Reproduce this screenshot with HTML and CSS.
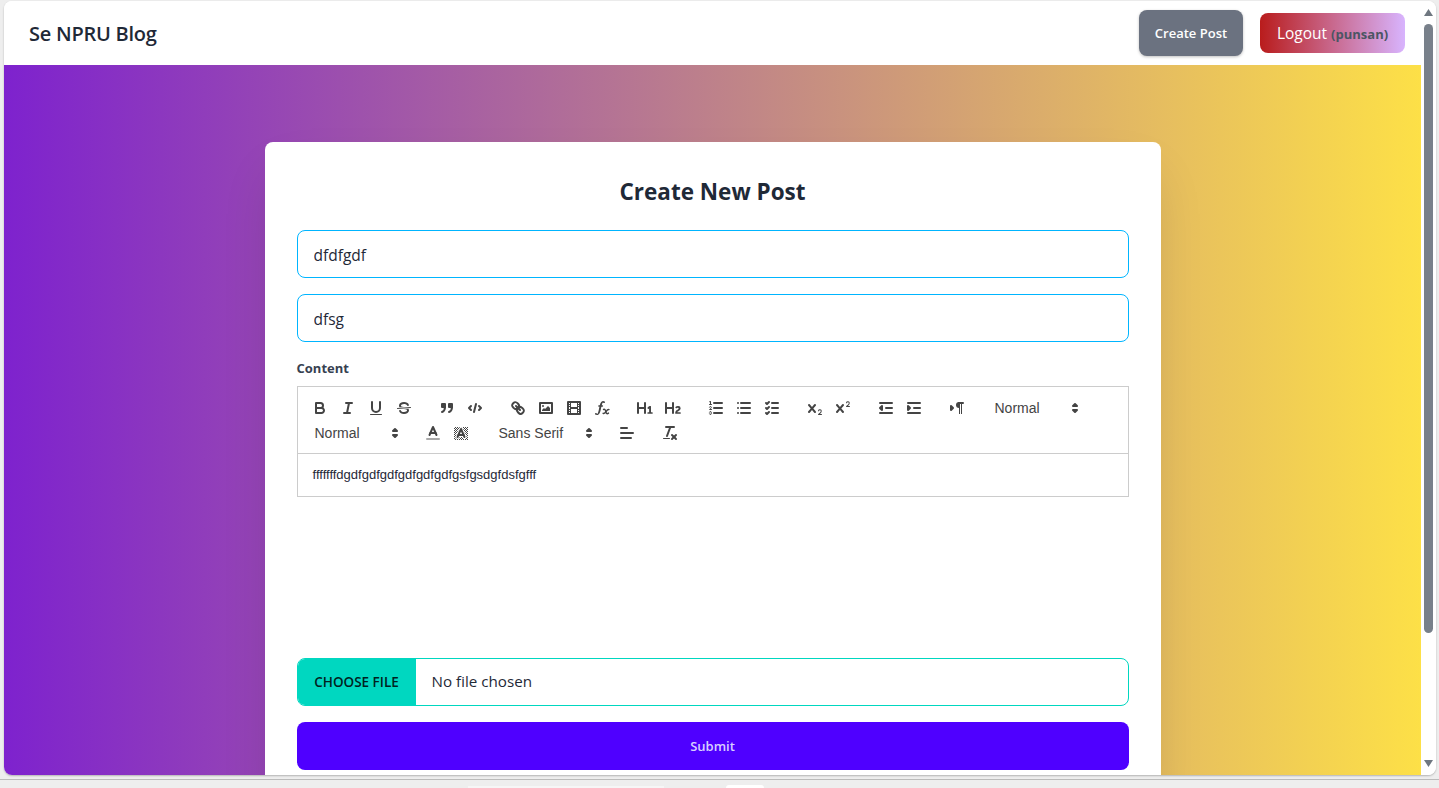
FILE: index.html
```html
<!DOCTYPE html>
<html lang="en">
<head>
    <meta charset="UTF-8">
    <meta name="viewport" content="width=device-width, initial-scale=1.0">
    <title>Create New Post</title>
    <link rel="stylesheet" href="styles.css">
</head>
<body>
    <div class="window">
        <div class="page">
            <nav class="navbar">
                <a class="brand">Se NPRU Blog</a>
                <div class="nav-actions">
                    <button class="btn-create" type="button">Create Post</button>
                    <button class="btn-logout" type="button">Logout <span class="username">(punsan)</span></button>
                </div>
            </nav>
            <main class="hero">
                <form class="card">
                    <h2 class="card-title">Create New Post</h2>
                    <input class="text-input" type="text" value="dfdfgdf">
                    <input class="text-input" type="text" value="dfsg">
                    <label class="field-label">Content</label>
                    <div class="toolbar">
                        <span class="tool-group">
                            <button class="tool" type="button"><svg viewBox="0 0 18 18"><path class="st" d="M5,4H9.5A2.5,2.5,0,0,1,12,6.5v0A2.5,2.5,0,0,1,9.5,9H5A0,0,0,0,1,5,9V4A0,0,0,0,1,5,4Z"/><path class="st" d="M5,9h5.5A2.5,2.5,0,0,1,13,11.5v0A2.5,2.5,0,0,1,10.5,14H5a0,0,0,0,1,0,0V9A0,0,0,0,1,5,9Z"/></svg></button>
                            <button class="tool" type="button"><svg viewBox="0 0 18 18"><line class="st" x1="7" x2="13" y1="4" y2="4"/><line class="st" x1="5" x2="11" y1="14" y2="14"/><line class="st" x1="8" x2="10" y1="14" y2="4"/></svg></button>
                            <button class="tool" type="button"><svg viewBox="0 0 18 18"><path class="st" d="M5,3V9a4.012,4.012,0,0,0,4,4H9a4.012,4.012,0,0,0,4-4V3"/><rect class="fl" height="1" rx="0.5" ry="0.5" width="12" x="3" y="15"/></svg></button>
                            <button class="tool" type="button"><svg viewBox="0 0 18 18"><line class="st thin" x1="15.5" x2="2.5" y1="8.5" y2="9.5"/><path class="fl" d="M9.007,8C6.542,7.791,6,7.519,6,6.5,6,5.792,7.283,5,9,5c1.571,0,2.765.679,2.969,1.309a1,1,0,0,0,1.9-.617C13.356,4.106,11.354,3,9,3,6.2,3,4,4.538,4,6.5a3.2,3.2,0,0,0,.5,1.843Z"/><path class="fl" d="M8.984,10C11.457,10.208,12,10.479,12,11.5c0,.708-1.283,1.5-3,1.5-1.571,0-2.765-.679-2.969-1.309a1,1,0,1,0-1.9.617C4.644,13.894,6.646,15,9,15c2.8,0,5-1.538,5-3.5a3.2,3.2,0,0,0-.5-1.843Z"/></svg></button>
                        </span>
                        <span class="tool-group">
                            <button class="tool" type="button"><svg viewBox="0 0 18 18"><rect class="fl st" height="3" width="3" x="4" y="5"/><rect class="fl st" height="3" width="3" x="11" y="5"/><path class="st" d="M7,8c0,4.031-3,5-3,5"/><path class="st" d="M14,8c0,4.031-3,5-3,5"/></svg></button>
                            <button class="tool" type="button"><svg viewBox="0 0 18 18"><polyline class="st" points="5 7 3 9 5 11"/><polyline class="st" points="13 7 15 9 13 11"/><line class="st" x1="10" x2="8" y1="5" y2="13"/></svg></button>
                        </span>
                        <span class="tool-group">
                            <button class="tool" type="button"><svg viewBox="0 0 18 18"><line class="st" x1="7" x2="11" y1="7" y2="11"/><path class="st" d="M8.9,4.577a3.476,3.476,0,0,1,.36,4.679A3.476,3.476,0,0,1,4.577,8.9C3.185,7.5,2.035,6.4,4.217,4.217S7.5,3.185,8.9,4.577Z"/><path class="st" d="M13.423,9.1a3.476,3.476,0,0,0-4.679-.36,3.476,3.476,0,0,0,.36,4.679c1.392,1.392,2.5,2.542,4.679.36S14.815,10.5,13.423,9.1Z"/></svg></button>
                            <button class="tool" type="button"><svg viewBox="0 0 18 18"><rect class="st" height="10" width="12" x="3" y="4"/><circle class="fl" cx="6" cy="7" r="1"/><polyline class="fl" points="5 12 5 11 7 9 8 10 11 7 13 9 13 12 5 12"/></svg></button>
                            <button class="tool" type="button"><svg viewBox="0 0 18 18"><rect class="st" height="12" width="12" x="3" y="3"/><rect class="fl" height="12" width="1" x="5" y="3"/><rect class="fl" height="12" width="1" x="12" y="3"/><rect class="fl" height="2" width="8" x="5" y="8"/><rect class="fl" height="1" width="3" x="3" y="5"/><rect class="fl" height="1" width="3" x="3" y="7"/><rect class="fl" height="1" width="3" x="3" y="10"/><rect class="fl" height="1" width="3" x="3" y="12"/><rect class="fl" height="1" width="3" x="12" y="5"/><rect class="fl" height="1" width="3" x="12" y="7"/><rect class="fl" height="1" width="3" x="12" y="10"/><rect class="fl" height="1" width="3" x="12" y="12"/></svg></button>
                            <button class="tool" type="button"><svg viewBox="0 0 18 18"><path class="fl" d="M11.759,2.482a2.561,2.561,0,0,0-3.53.607A7.656,7.656,0,0,0,6.8,6.2C6.109,9.188,5.275,14.677,4.15,14.927a1.545,1.545,0,0,0-1.3-.933A0.922,0.922,0,0,0,2,15.036S1.954,16,4.119,16s3.091-2.691,3.7-5.553c0.177-.826.36-1.726,0.554-2.6L8.775,6.2c0.381-1.421.807-2.521,1.306-2.676a1.014,1.014,0,0,0,1.02.56A0.966,0.966,0,0,0,11.759,2.482Z"/><rect class="fl" height="1.6" rx="0.8" ry="0.8" width="5" x="5.15" y="6.2"/><path class="st x-stroke" d="M10.5,10.5c1.4-.7,1.8.4,2.2,2s1.1,3,2.8,1.6"/><path class="st x-stroke" d="M16,10.6c-1.4-.5-2.3,1-3,2.1s-1.5,2.2-2.9,1.6"/></svg></button>
                        </span>
                        <span class="tool-group">
                            <button class="tool" type="button"><svg viewBox="0 0 18 18"><path class="fl" d="M10,4V14a1,1,0,0,1-2,0V10H3v4a1,1,0,0,1-2,0V4A1,1,0,0,1,3,4V8H8V4a1,1,0,0,1,2,0Zm6.06787,9.209H14.98975V7.59863a.54085.54085,0,0,0-.605-.60547h-.62744a1.01119,1.01119,0,0,0-.748.29688L11.645,8.56641a.5435.5435,0,0,0-.022.8584l.28613.30762a.53861.53861,0,0,0,.84717.0332l.09912-.08789a1.2137,1.2137,0,0,0,.2417-.35254h.02246s-.01123.30859-.01123.60547V13.209H12.041a.54085.54085,0,0,0-.605.60547v.43945a.54085.54085,0,0,0,.605.60547h4.02686a.54085.54085,0,0,0,.605-.60547v-.43945A.54085.54085,0,0,0,16.06787,13.209Z"/></svg></button>
                            <button class="tool" type="button"><svg viewBox="0 0 18 18"><path class="fl" d="M16.73975,13.81445v.43945a.54085.54085,0,0,1-.605.60547H11.855a.58392.58392,0,0,1-.64893-.60547V14.0127c0-2.90527,3.39941-3.42187,3.39941-4.51855a.77675.77675,0,0,0-.84717-.78125,1.17684,1.17684,0,0,0-.83594.38477c-.2749.26367-.561.374-.85791.13184l-.4292-.34082c-.30811-.24219-.38525-.51758-.1543-.81445a2.97155,2.97155,0,0,1,2.45361-1.17676,2.45393,2.45393,0,0,1,2.68408,2.40918c0,2.45312-3.1792,2.92676-3.27832,3.93848h2.79443A.54085.54085,0,0,1,16.73975,13.81445ZM9,3A.99974.99974,0,0,0,8,4V8H3V4A1,1,0,0,0,1,4V14a1,1,0,0,0,2,0V10H8v4a1,1,0,0,0,2,0V4A.99974.99974,0,0,0,9,3Z"/></svg></button>
                        </span>
                        <span class="tool-group">
                            <button class="tool" type="button"><svg viewBox="0 0 18 18"><line class="st" x1="7" x2="15" y1="4" y2="4"/><line class="st" x1="7" x2="15" y1="9" y2="9"/><line class="st" x1="7" x2="15" y1="14" y2="14"/><line class="st thin" x1="2.5" x2="4.5" y1="5.5" y2="5.5"/><path class="fl" d="M3.5,6A0.5,0.5,0,0,1,3,5.5V3.085l-0.276.138A0.5,0.5,0,0,1,2.053,3c-0.124-.247-0.023-0.324.224-0.447l1-.5A0.5,0.5,0,0,1,4,2.5v3A0.5,0.5,0,0,1,3.5,6Z"/><path class="st thin" d="M4.5,10.5h-2c0-.234,1.85-1.076,1.85-2.234A0.959,0.959,0,0,0,2.5,8.156"/><path class="st thin" d="M2.5,14.846a0.959,0.959,0,0,0,1.85-.109A0.7,0.7,0,0,0,3.75,14a0.688,0.688,0,0,0,.6-0.736,0.959,0.959,0,0,0-1.85-.109"/></svg></button>
                            <button class="tool" type="button"><svg viewBox="0 0 18 18"><line class="st" x1="6" x2="15" y1="4" y2="4"/><line class="st" x1="6" x2="15" y1="9" y2="9"/><line class="st" x1="6" x2="15" y1="14" y2="14"/><line class="st" x1="3" x2="3" y1="4" y2="4"/><line class="st" x1="3" x2="3" y1="9" y2="9"/><line class="st" x1="3" x2="3" y1="14" y2="14"/></svg></button>
                            <button class="tool" type="button"><svg viewBox="0 0 18 18"><line class="st" x1="9" x2="15" y1="4" y2="4"/><polyline class="st" points="3 4 4 5 6 3"/><line class="st" x1="9" x2="15" y1="14" y2="14"/><polyline class="st" points="3 14 4 15 6 13"/><line class="st" x1="9" x2="15" y1="9" y2="9"/><polyline class="st" points="3 9 4 10 6 8"/></svg></button>
                        </span>
                        <span class="tool-group">
                            <button class="tool" type="button"><svg viewBox="0 0 18 18"><path class="fl" d="M15.5,15H13.861a3.858,3.858,0,0,0,1.914-2.975,1.8,1.8,0,0,0-1.6-1.751A1.921,1.921,0,0,0,12.021,11.7a0.50013,0.50013,0,1,0,.957.291h0a0.914,0.914,0,0,1,1.053-.725,0.81,0.81,0,0,1,.744.762c0,1.076-1.16971,1.86982-1.93971,2.43082A1.45639,1.45639,0,0,0,12,15.5a0.5,0.5,0,0,0,.5.5h3A0.5,0.5,0,0,0,15.5,15Z"/><path class="fl" d="M9.65,5.241a1,1,0,0,0-1.409.108L6,7.964,3.759,5.349A1,1,0,0,0,2.192,6.59178Q2.21,6.6,2.241,6.651L4.684,9.5,2.241,12.35A1,1,0,0,0,3.71,13.70722q0.04-.05.049-0.05L6,11.036,8.241,13.65a1,1,0,1,0,1.567-1.24277Q9.8,12.4,9.759,12.35L7.316,9.5,9.759,6.651A1,1,0,0,0,9.65,5.241Z"/></svg></button>
                            <button class="tool" type="button"><svg viewBox="0 0 18 18"><path class="fl" d="M15.5,7H13.861a4.015,4.015,0,0,0,1.914-2.975,1.8,1.8,0,0,0-1.6-1.751A1.922,1.922,0,0,0,12.021,3.7a0.5,0.5,0,1,0,.957.291,0.917,0.917,0,0,1,1.053-.725,0.81,0.81,0,0,1,.744.762c0,1.077-1.164,1.925-1.934,2.486A1.423,1.423,0,0,0,12,7.5a0.5,0.5,0,0,0,.5.5h3A0.5,0.5,0,0,0,15.5,7Z"/><path class="fl" d="M9.651,5.241a1,1,0,0,0-1.41.108L6,7.964,3.759,5.349a1,1,0,1,0-1.519,1.3L4.683,9.5,2.241,12.35a1,1,0,1,0,1.519,1.3L6,11.036,8.241,13.65a1,1,0,0,0,1.519-1.3L7.317,9.5,9.759,6.651A1,1,0,0,0,9.651,5.241Z"/></svg></button>
                        </span>
                        <span class="tool-group">
                            <button class="tool" type="button"><svg viewBox="0 0 18 18"><line class="st" x1="3" x2="15" y1="14" y2="14"/><line class="st" x1="3" x2="15" y1="4" y2="4"/><line class="st" x1="9" x2="15" y1="9" y2="9"/><polyline class="fl st" points="5 7 5 11 3 9 5 7"/></svg></button>
                            <button class="tool" type="button"><svg viewBox="0 0 18 18"><line class="st" x1="3" x2="15" y1="14" y2="14"/><line class="st" x1="3" x2="15" y1="4" y2="4"/><line class="st" x1="9" x2="15" y1="9" y2="9"/><polyline class="fl st" points="3 7 3 11 5 9 3 7"/></svg></button>
                        </span>
                        <span class="tool-group">
                            <button class="tool" type="button"><svg viewBox="0 0 18 18"><polygon class="fl st" points="3 11 5 9 3 7 3 11"/><line class="st" x1="15" x2="11" y1="4" y2="4"/><path class="fl" d="M11,3a3,3,0,0,0,0,6h1V3H11Z"/><rect class="fl" height="11" width="1" x="11" y="4"/><rect class="fl" height="11" width="1" x="13" y="4"/></svg></button>
                        </span>
                        <span class="tool-group">
                            <span class="picker">Normal<svg viewBox="0 0 18 18"><polygon class="fl arrow" points="7 11 9 13 11 11 7 11"/><polygon class="fl arrow" points="7 7 9 5 11 7 7 7"/></svg></span>
                        </span>
                        <span class="tool-group">
                            <span class="picker">Normal<svg viewBox="0 0 18 18"><polygon class="fl arrow" points="7 11 9 13 11 11 7 11"/><polygon class="fl arrow" points="7 7 9 5 11 7 7 7"/></svg></span>
                        </span>
                        <span class="tool-group">
                            <button class="tool" type="button"><svg viewBox="0 0 18 18"><line class="label-line" x1="3" x2="15" y1="15" y2="15"/><polyline class="st" points="5.5 11 9 3 12.5 11"/><line class="st" x1="11.63" x2="6.38" y1="9" y2="9"/></svg></button>
                            <button class="tool" type="button"><svg viewBox="0 0 18 18"><defs><pattern id="dither" width="2" height="2" patternUnits="userSpaceOnUse"><rect class="fl" width="1" height="1"/><rect class="fl" x="1" y="1" width="1" height="1"/></pattern></defs><rect fill="url(#dither)" x="2" y="3" width="14" height="13"/><polyline class="halo" points="5.5 13 9 5 12.5 13"/><line class="halo" x1="11.63" x2="6.38" y1="11" y2="11"/><polyline class="st" points="5.5 13 9 5 12.5 13"/><line class="st" x1="11.63" x2="6.38" y1="11" y2="11"/></svg></button>
                        </span>
                        <span class="tool-group">
                            <span class="picker picker-font">Sans Serif<svg viewBox="0 0 18 18"><polygon class="fl arrow" points="7 11 9 13 11 11 7 11"/><polygon class="fl arrow" points="7 7 9 5 11 7 7 7"/></svg></span>
                        </span>
                        <span class="tool-group">
                            <button class="tool" type="button"><svg viewBox="0 0 18 18"><line class="st" x1="3" x2="15" y1="9" y2="9"/><line class="st" x1="3" x2="13" y1="14" y2="14"/><line class="st" x1="3" x2="9" y1="4" y2="4"/></svg></button>
                        </span>
                        <span class="tool-group">
                            <button class="tool" type="button"><svg viewBox="0 0 18 18"><line class="st" x1="5" x2="13" y1="3" y2="3"/><line class="st" x1="6" x2="9.35" y1="12" y2="3"/><line class="st" x1="11" x2="15" y1="11" y2="15"/><line class="st" x1="15" x2="11" y1="11" y2="15"/><rect class="fl" height="1" rx="0.5" ry="0.5" width="7" x="2" y="14"/></svg></button>
                        </span>
                    </div>
                    <div class="editor">fffffffdgdfgdfgdfgdfgdfgdfgsfgsdgfdsfgfff</div>
                    <input class="file-input" type="file">
                    <button class="btn-submit" type="submit">Submit</button>
                </form>
            </main>
        </div>
        <div class="scrollbar">
            <svg class="scroll-arrow" viewBox="0 0 9 7"><polygon points="4.5 0 9 7 0 7"/></svg>
            <div class="scroll-track"><div class="scroll-thumb"></div></div>
            <svg class="scroll-arrow" viewBox="0 0 9 7"><polygon points="0 0 9 0 4.5 7"/></svg>
        </div>
    </div>
    <div class="taskstrip">
        <span class="strip-tab strip-wide"></span>
        <span class="strip-tab strip-small"></span>
    </div>
</body>
</html>
```

FILE: styles.css
```css
* { box-sizing: border-box; }
html, body { height: 788px; overflow: hidden; }
body { margin: 0; background: #eeeeee; font-family: "Open Sans", "Noto Sans", sans-serif; color: #1f2937; display: flex; flex-direction: column; }

.window { margin: 1px 3px 0 4px; height: 774px; background: #fff; border-radius: 8px; overflow: hidden; display: flex; box-shadow: 0 1px 2px rgba(0,0,0,.25); }
.page { flex: 1; min-width: 0; display: flex; flex-direction: column; }

.navbar { height: 64px; flex: none; display: flex; align-items: center; justify-content: space-between; padding: 0 16px 0 25px; background: #fff; }
.brand { font-size: 20px; font-weight: 600; letter-spacing: -.25px; color: #1f2937; }
.nav-actions { display: flex; align-items: center; gap: 17px; }
.btn-create { width: 104px; height: 46px; border: none; border-radius: 8px; background: #6b7280; color: #fff; font: 600 13px "Open Sans", sans-serif; box-shadow: 0 1px 3px rgba(0,0,0,.25); padding: 0; }
.btn-logout { width: 145px; height: 40px; border: none; border-radius: 8px; background: linear-gradient(to right, #b91c1c, #d8b4fe); color: #fff; font: 400 15.5px "Open Sans", sans-serif; padding: 0; }
.username { font-size: 13px; font-weight: 700; color: #4b5563; }

.hero { flex: 1; min-height: 0; overflow: hidden; background: linear-gradient(to right, #7e22ce, #fde047); padding-top: 77px; }
.card { width: 896px; margin: 0 auto; padding: 32px; background: #fff; border-radius: 8px; box-shadow: 0 25px 50px -12px rgba(0,0,0,.15); display: flex; flex-direction: column; }
.card-title { margin: 0 0 24px; height: 32px; line-height: 36px; font-size: 22.5px; font-weight: 700; text-align: center; color: #1f2937; }

.text-input { width: 100%; height: 48px; margin-bottom: 16px; padding: 2px 16px 0; border: 1px solid #00b5ff; border-radius: 8px; background: #fff; color: #1f2937; font: 400 15.5px "Open Sans", sans-serif; outline: none; }
.field-label { height: 20px; margin: 0 0 8px; line-height: 20px; font-size: 13px; font-weight: 700; color: #374151; }

.toolbar { height: 68px; border: 1px solid #ccc; padding: 9px 8px 8px; display: flex; flex-wrap: wrap; align-content: flex-start; row-gap: 1px; font-family: "Liberation Sans", Arial, sans-serif; }
.tool-group { display: flex; height: 24px; margin-right: 15px; }
.tool { width: 28px; height: 24px; padding: 3px 5px; border: none; background: none; }
.tool svg { display: block; width: 18px; height: 18px; }
.st { fill: none; stroke: #444; stroke-width: 2; stroke-linecap: round; stroke-linejoin: round; }
.thin { stroke-width: 1; }
.x-stroke { stroke-width: 1.4; }
.halo { fill: none; stroke: #fff; stroke-width: 4; stroke-linecap: round; stroke-linejoin: round; }
.fl { fill: #444; }
.arrow { stroke: #444; stroke-width: 2; stroke-linejoin: round; }
.fl.st { fill: #444; }
.label-line { stroke: #aaa; stroke-width: 2; stroke-linecap: round; }
.picker { width: 98px; height: 24px; padding-left: 9px; display: flex; align-items: center; justify-content: space-between; font-size: 14px; font-weight: 500; color: #444; }
.picker svg { width: 18px; height: 18px; flex: none; }
.picker-font { width: 108px; }

.editor { height: 44px; margin-top: -1px; margin-bottom: 161px; border: 1px solid #ccc; padding: 12px 15px; font: 13px/18px "Liberation Sans", Arial, sans-serif; color: #1f2937; white-space: nowrap; }

.file-input { width: 100%; height: 48px; margin-bottom: 16px; padding: 0; border: 1px solid #00d7c0; border-radius: 8px; background: #fff; color: #1f2937; font: 400 15.2px "Open Sans", sans-serif; }
.file-input::file-selector-button { width: 118px; height: 46px; margin-right: 16px; padding: 0; border: none; background: #00d7c0; color: #00231f; font: 600 13.5px "Open Sans", sans-serif; text-transform: uppercase; }
.btn-submit { width: 100%; height: 48px; flex: none; border: none; border-radius: 8px; background: #4f00ff; color: #d8cfff; font: 600 13px "Open Sans", sans-serif; }

.scrollbar { width: 15px; flex: none; display: flex; flex-direction: column; align-items: center; padding: 8px 0 8px; background: #fff; }
.scroll-arrow { width: 9px; height: 7px; flex: none; fill: #6f7780; }
.scroll-track { flex: 1; width: 9px; padding-top: 8px; }
.scroll-thumb { width: 9px; height: 609px; background: #78808a; border-radius: 5px; }

.taskstrip { margin-top: 4px; flex: 1; border-top: 1px solid #bbb; display: flex; align-items: flex-end; padding-left: 468px; }
.strip-tab { height: 2px; background: #f6f6f6; }
.strip-wide { width: 196px; margin-right: 62px; }
.strip-small { width: 38px; height: 3px; background: #fff; border-radius: 4px 4px 0 0; }
```
